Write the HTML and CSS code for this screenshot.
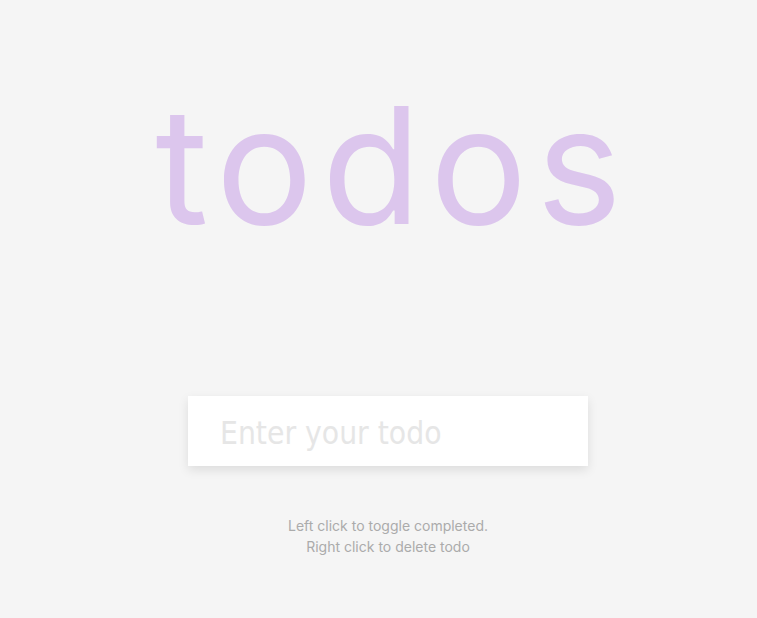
FILE: index.html
```html
<!DOCTYPE html>
<html lang="en">
<head>
<meta charset="utf-8">
<title>todos</title>
<link rel="stylesheet" href="styles.css">
</head>
<body>
<main class="app">
  <h1 class="title">todos</h1>
  <form class="todo-form">
    <input class="todo-input" type="text" placeholder="Enter your todo">
  </form>
  <p class="hint">Left click to toggle completed.<br>Right click to delete todo</p>
</main>
</body>
</html>
```
FILE: styles.css
```css
* { box-sizing: border-box; }
html, body { margin: 0; padding: 0; }
body {
  background: #f5f5f5;
  font-family: Inter, "Noto Sans", sans-serif;
  min-height: 618px;
}
.app {
  display: flex;
  flex-direction: column;
  align-items: center;
  padding-left: 19px;
}
.title {
  margin: 84px 0 0;
  padding-left: 10px;
  font-family: Inter, sans-serif;
  font-weight: 400;
  font-size: 162px;
  line-height: 1;
  letter-spacing: 9px;
  color: #dcc6ed;
}
.todo-form {
  margin-top: 150px;
}
.todo-input {
  display: block;
  width: 400px;
  height: 70px;
  border: none;
  outline: none;
  background: #fff;
  padding: 4px 32px 0;
  font-family: "DejaVu Sans", sans-serif;
  font-stretch: condensed;
  font-size: 31.5px;
  color: #777;
  box-shadow: 0 4px 10px rgba(0, 0, 0, 0.1);
}
.todo-input::placeholder {
  color: #e6e6e6;
}
.hint {
  margin: 49px 0 0;
  text-align: center;
  font-size: 14px;
  line-height: 21px;
  color: #ababab;
}
```
